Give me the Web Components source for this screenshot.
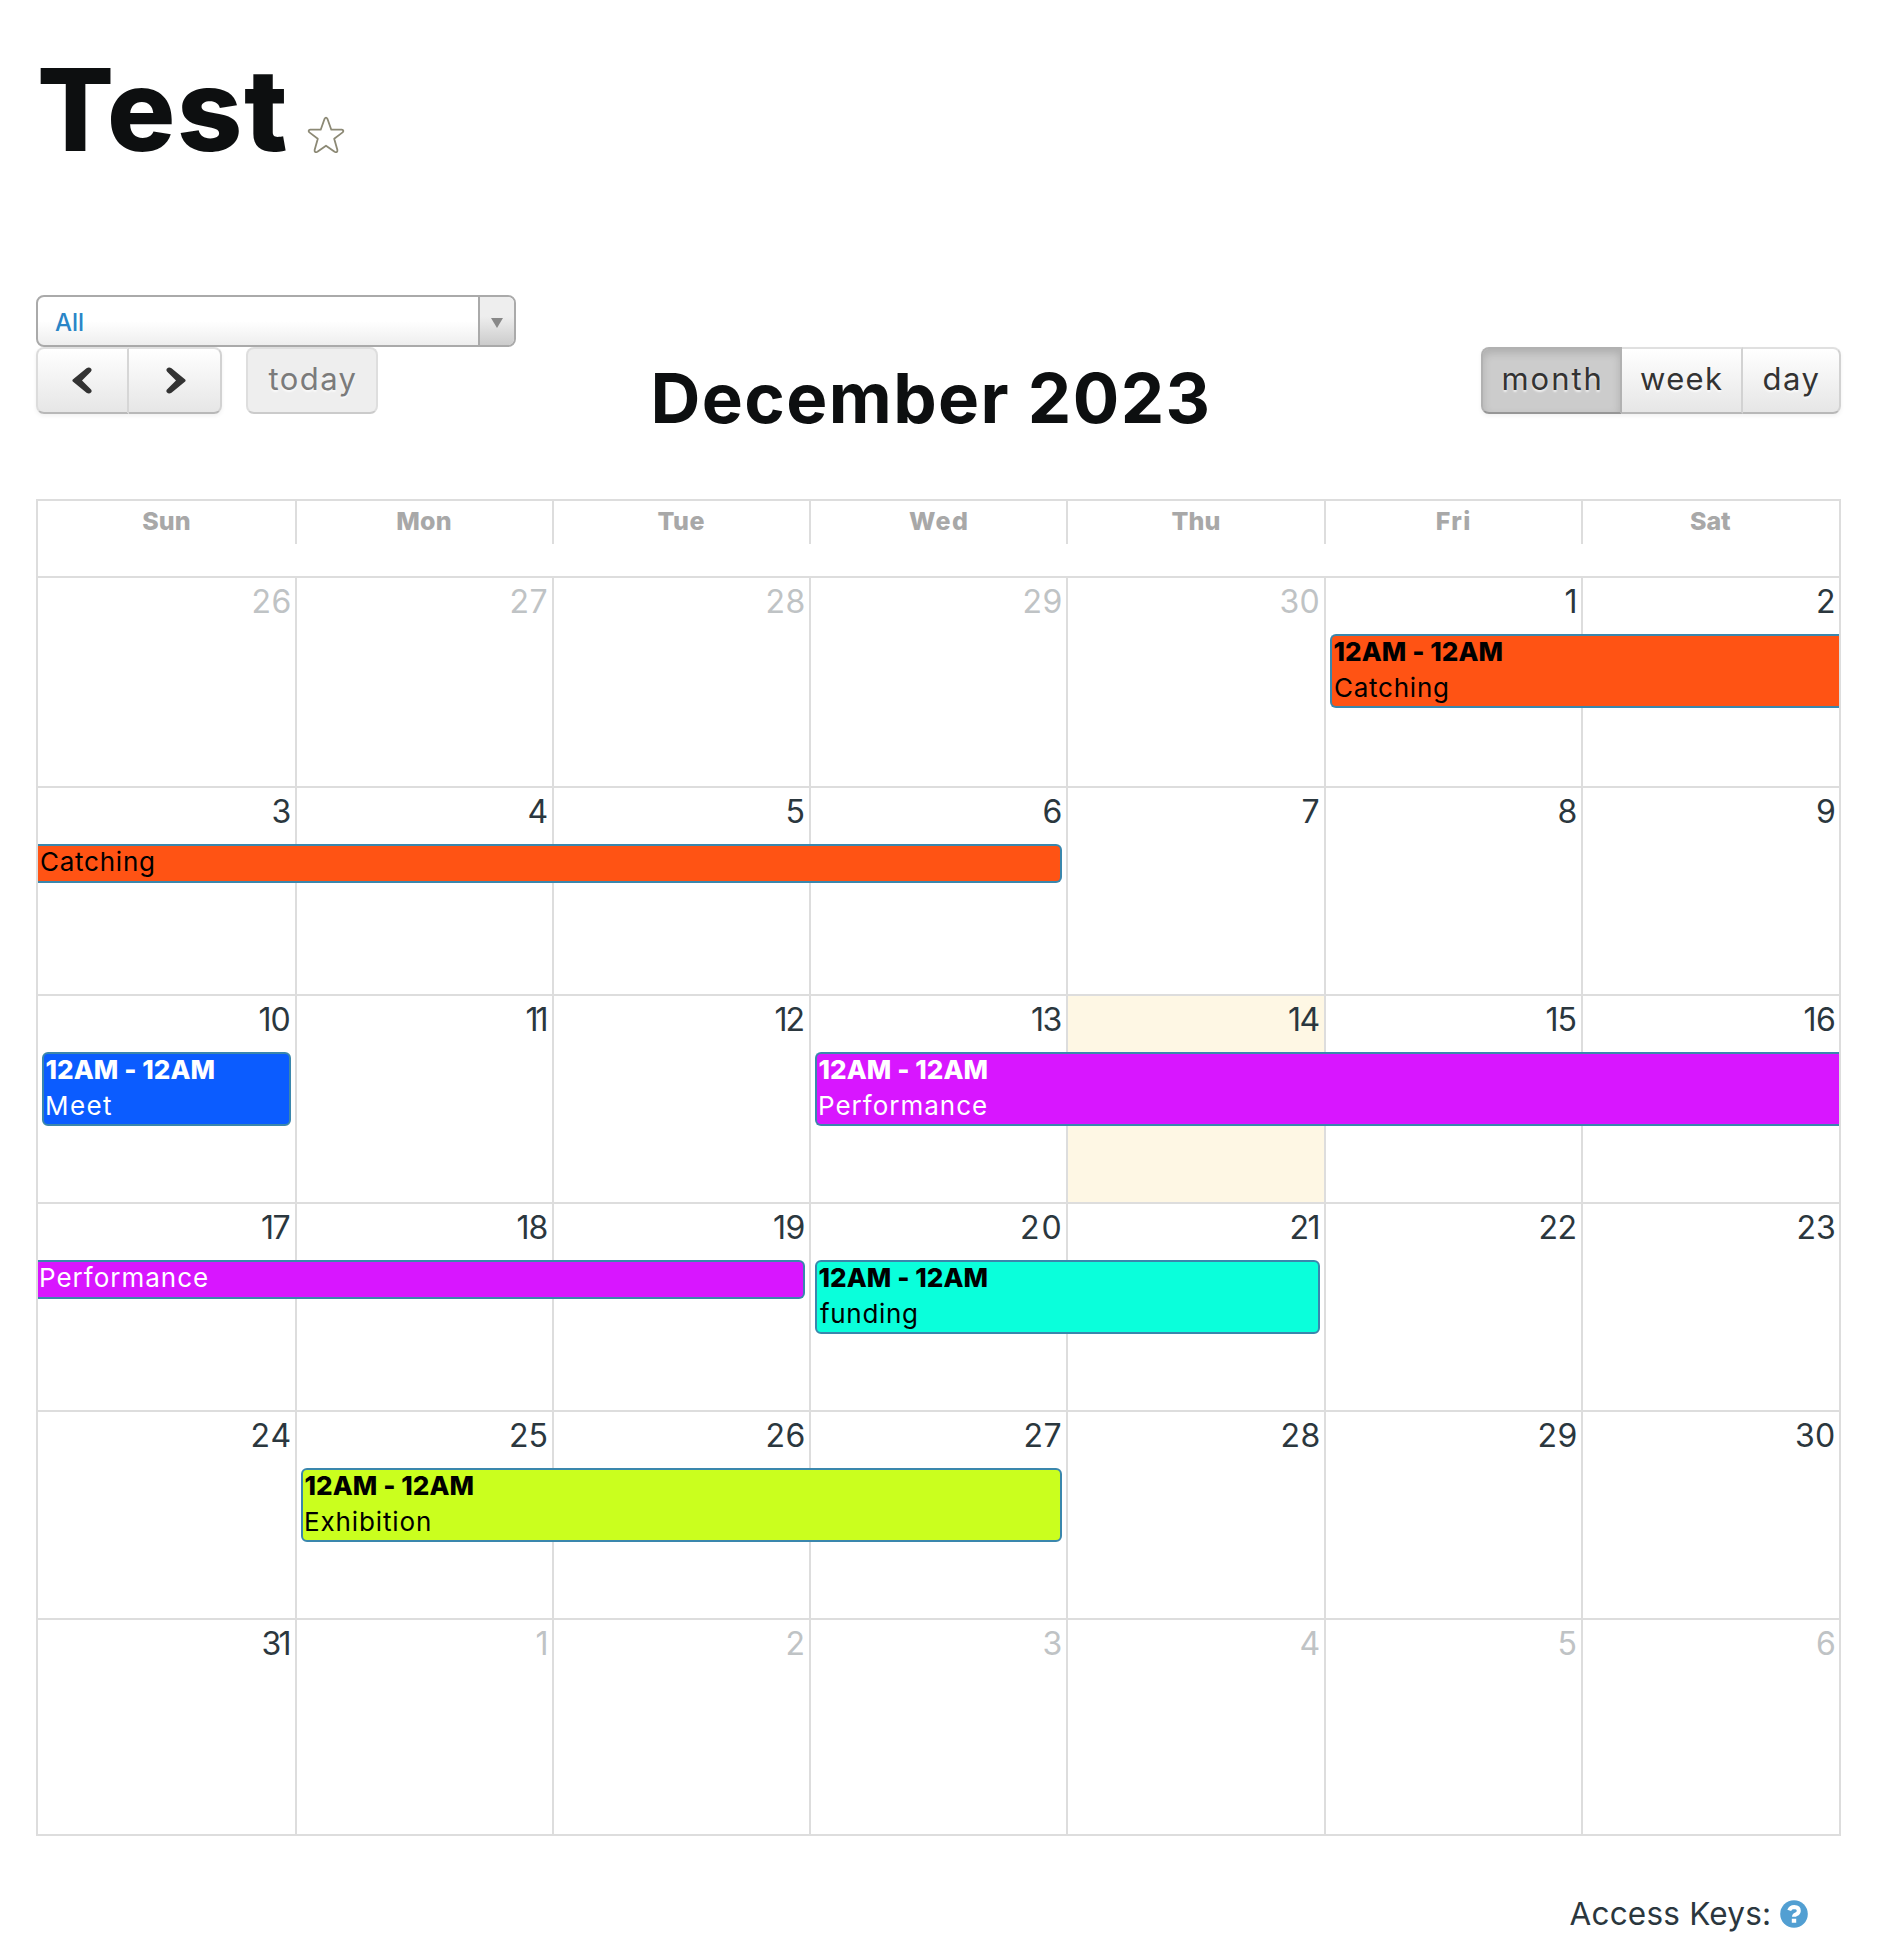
<!DOCTYPE html>
<html lang="en">
<head>
<meta charset="utf-8">
<title>Test</title>
<style>
body{margin:0;background:#fff;color:#2b373e;font-family:Inter,"Liberation Sans",sans-serif}
</style>
</head>
<body>
<calendar-page></calendar-page>
<script>
const define=(name,html,setup)=>customElements.define(name,class extends HTMLElement{
  connectedCallback(){
    if(this.shadowRoot)return;
    const root=this.attachShadow({mode:'open'});
    root.innerHTML=typeof html==='function'?html(this):html;
    if(setup)setup(this,root);
  }
});
const pen=document.createElement('canvas').getContext('2d');

/* A single line of text tracked so that its ink spans exactly w pixels. */
define('fit-text','<style>:host{display:inline-block;white-space:nowrap;text-align:left;flex:none}span{display:inline-block}</style><span><slot></slot></span>',(el,root)=>{
  const w=+el.getAttribute('w'),s=root.querySelector('span'),c=getComputedStyle(el),t=el.textContent;
  pen.font=`${c.fontWeight} ${c.fontSize} ${c.fontFamily}`;
  const m=pen.measureText(t),ink=m.actualBoundingBoxLeft+m.actualBoundingBoxRight;
  el.style.width=(w||ink)+'px';
  s.style.marginLeft=m.actualBoundingBoxLeft+'px';
  s.style.marginRight='-20px';
  if(w&&t.length>1)s.style.letterSpacing=(w-ink)/(t.length-1)+'px';
});

define('page-title',el=>`<style>
:host{display:flex;box-sizing:border-box;height:295px;padding:50px 0 0 4px;color:#0d0f10}
h1{margin:0;font-size:114px;line-height:120px;font-weight:800}
svg{margin:66px 0 0 21px;width:38px;height:38px}
</style><h1><fit-text w="246">${el.getAttribute('label')}</fit-text></h1>
<svg viewBox="0 0 38 38" fill="none" stroke="#8c8975" stroke-width="1.8" stroke-linejoin="round"><path d="M17.5 3Q19 .3 20.5 3L24.3 13.7H34.7Q37.5 14.3 35.6 16.4L27.2 22.7L30.4 34Q30.6 37.2 27.6 35.8L19 29.7L10.4 35.8Q7.4 37.2 7.6 34L10.8 22.7L2.4 16.4Q.5 14.3 3.3 13.7H13.7Z"/></svg>`);

define('filter-select',el=>`<style>
:host{display:flex;box-sizing:border-box;width:480px;height:52px;border:2px solid #aaa;border-radius:8px;overflow:hidden;background:linear-gradient(#fff 50%,#eee)}
.v{flex:1;padding-left:17px;color:#2a85c7;font-size:24px;font-weight:450;line-height:52px}
.a{width:34px;border-left:2px solid #aaa;background:linear-gradient(#eee 40%,#ccc);display:flex;align-items:center;justify-content:center}
svg{width:12px;height:10px;margin-top:4px}
</style><div class="v"><fit-text w="28">${el.getAttribute('value')}</fit-text></div><div class="a"><svg viewBox="0 0 12 10"><path d="M0 0H12L6 10Z" fill="#888"/></svg></div>`);

define('button-group',`<style>
:host{display:flex;height:67px;border-radius:8px;box-shadow:0 2px 4px rgba(0,0,0,.06)}
</style><slot></slot>`);

define('cal-button',`<style>
:host{display:flex;box-sizing:border-box;height:67px;justify-content:center;align-items:flex-start;font-size:31px;line-height:60px;color:#333;text-shadow:0 2px 2px rgba(255,255,255,.75);border:2px solid;border-color:#e0e0e0 #d2d2d2 #b8b8b8 #dcdcdc;background:linear-gradient(#fff,#e6e6e6)}
:host([pos=first]){border-radius:8px 0 0 8px}
:host([pos=mid]),:host([pos=last]){border-left:0}
:host([pos=first]){border-right-color:#d6d6d6}
:host([pos=last]){border-radius:0 8px 8px 0}
:host([active]){background:#ccc;border-color:#b1b1b1 #b1b1b1 #969696;box-shadow:inset 0 4px 8px rgba(0,0,0,.15)}
:host([disabled]){border-radius:8px;background:#eee;color:#7b7b7b;border-color:#dedede #dedede #cbcbcb}
</style><slot></slot>`);

define('chevron-icon',el=>`<style>:host{display:block;height:27px;margin-top:18px}svg{display:block;${el.hasAttribute('right')?'transform:scaleX(-1);margin-left:2px':'margin-right:2px'}}</style>
<svg width="20" height="27" viewBox="0 0 20 27"><path d="M.8 12.6Q0 13.5 .8 14.4L14.5 25.8Q17.2 27.6 19.2 25.2Q20.2 23.6 18.8 22.2L10 13.5L18.8 4.8Q20.2 3.4 19.2 1.8Q17.2-.6 14.5 1.2Z" fill="#333"/></svg>`);

define('cal-toolbar',`<style>
:host{display:flex;align-items:flex-start;height:152px}
.today{width:132px;margin-left:24px}
h2{margin:11px 0 0 276.5px;font-size:69px;line-height:80px;font-weight:750;color:#0d0f10}
.views{margin-left:auto}
</style>
<button-group><cal-button pos="first" style="width:93px"><chevron-icon></chevron-icon></cal-button><cal-button pos="last" style="width:93px"><chevron-icon right></chevron-icon></cal-button></button-group>
<cal-button class="today" disabled><fit-text w="87">today</fit-text></cal-button>
<h2><fit-text w="553">December 2023</fit-text></h2>
<button-group class="views"><cal-button active pos="first" style="width:141px"><fit-text w="96">month</fit-text></cal-button><cal-button pos="mid" style="width:121px"><fit-text w="81">week</fit-text></cal-button><cal-button pos="last" style="width:98px"><fit-text w="55">day</fit-text></cal-button></button-group>`);

const columns='grid-template-columns:259px 257px 257px 257px 258px 257px 256px';
const weekdays=[['Sun',47.5],['Mon',53.5],['Tue',47],['Wed',58],['Thu',48],['Fri',32.5],['Sat',41]];
define('cal-weekdays',()=>`<style>
:host{display:grid;${columns};height:75px}
div{box-sizing:border-box;height:43px;border-right:2px solid #ddd;padding-right:1px;text-align:center;font-size:25px;line-height:40px;font-weight:800;color:#a8a8a8}
div:last-child{border:0}
</style>${weekdays.map(([d,w])=>`<div><fit-text w="${w}">${d}</fit-text></div>`).join('')}`);

const pairs={10:30,11:20,12:28,13:28.5,14:29.5,15:29,16:29.5,17:27.5,18:29,19:29.5,20:38.5,21:27,22:35,23:35.5,24:37,25:35.5,26:36,27:35,28:36,29:36,30:38,31:27};
define('cal-week',el=>{
  const today=el.getAttribute('today'),out=(el.getAttribute('outside')||'').split(' ');
  return `<style>
:host{display:grid;box-sizing:border-box;${columns};grid-template-rows:56px 1fr;border-top:2px solid #ddd}
div{box-sizing:border-box;grid-row:1/3;border-right:2px solid #ddd;padding:3px 5.5px 0 0;text-align:right;font-size:32px;line-height:42px}
div:nth-of-type(7){border:0;padding-right:5px}
.out{color:#bfc3c5}
.today{background:#fef7e4}
</style>${el.getAttribute('days').split(' ').map((d,i)=>`<div class="${out.includes(d)?'out':d===today?'today':''}" style="grid-column:${i+1}"><fit-text w="${pairs[d]||''}">${d}</fit-text></div>`).join('')}<slot></slot>`;
});

define('cal-event',el=>`<style>
:host{box-sizing:border-box;grid-row:2;align-self:start;z-index:1;height:74px;margin:0 6px 0 4px;border:2px solid #3a87ad;border-radius:6px;padding-left:2px;font-size:26px;line-height:36px}
:host([from=prev]){margin-left:0;border-left:0;border-radius:0 6px 6px 0;height:39px;padding-left:2px}
:host([to=next]){margin-right:0;border-right:0;border-radius:6px 0 0 6px}
p{margin:0;height:36px;padding-left:1px}
b{display:block;height:36px;font-weight:800;padding-left:.5px}
.in{margin-top:-2px}
</style><div class="in">${el.getAttribute('from')?'':'<b><fit-text w="168">12AM - 12AM</fit-text></b>'}<p><slot></slot></p></div>`);

define('cal-month',`<style>
:host{display:block;width:1801px;border:2px solid #ddd;margin-top:0}
</style>
<cal-weekdays></cal-weekdays>
<cal-week days="26 27 28 29 30 1 2" outside="26 27 28 29 30" style="height:210px"><cal-event to="next" style="grid-column:6/8;background:#ff5314;color:#000"><fit-text w="112">Catching</fit-text></cal-event></cal-week>
<cal-week days="3 4 5 6 7 8 9" style="height:208px"><cal-event from="prev" style="grid-column:1/5;background:#ff5314;color:#000"><fit-text w="112">Catching</fit-text></cal-event></cal-week>
<cal-week days="10 11 12 13 14 15 16" today="14" style="height:208px"><cal-event style="grid-column:1/2;background:#0b5cff;color:#fff"><fit-text w="64">Meet</fit-text></cal-event><cal-event to="next" style="grid-column:4/8;background:#d816ff;color:#fff"><fit-text w="166">Performance</fit-text></cal-event></cal-week>
<cal-week days="17 18 19 20 21 22 23" style="height:208px"><cal-event from="prev" style="grid-column:1/4;background:#d816ff;color:#fff"><fit-text w="166">Performance</fit-text></cal-event><cal-event style="grid-column:4/6;background:#0affdb;color:#000"><fit-text w="96">funding</fit-text></cal-event></cal-week>
<cal-week days="24 25 26 27 28 29 30" style="height:208px"><cal-event style="grid-column:2/5;background:#caff1e;color:#000"><fit-text w="124">Exhibition</fit-text></cal-event></cal-week>
<cal-week days="31 1 2 3 4 5 6" outside="1 2 3 4 5 6" style="height:216px"></cal-week>`);

define('access-keys',`<style>
:host{display:flex;justify-content:flex-end;padding:58px 33px 0 0;font-size:31.5px;line-height:40px}
svg{width:28px;height:28px;margin:6px 0 0 11px}
</style><fit-text w="199.5">Access Keys:</fit-text>
<svg viewBox="0 0 28 28"><circle cx="14" cy="14" r="13.8" fill="#529fd2"/><path d="M9.2 10.4Q10.5 7 14.2 7Q18.8 7.2 18.8 10.8Q18.7 13 16.2 14.2Q14 15.2 14 16.8" fill="none" stroke="#fff" stroke-width="4"/><path d="M11.8 18.8h4.4v4h-4.4z" fill="#fff"/></svg>`);

define('calendar-page',`<style>
:host{display:block;box-sizing:border-box;width:1887px;height:1958px;padding:0 46px 0 36px;overflow:hidden;background:#fff}
</style>
<page-title label="Test"></page-title>
<filter-select value="All"></filter-select>
<cal-toolbar></cal-toolbar>
<cal-month></cal-month>
<access-keys></access-keys>`);
</script>
</body>
</html>
